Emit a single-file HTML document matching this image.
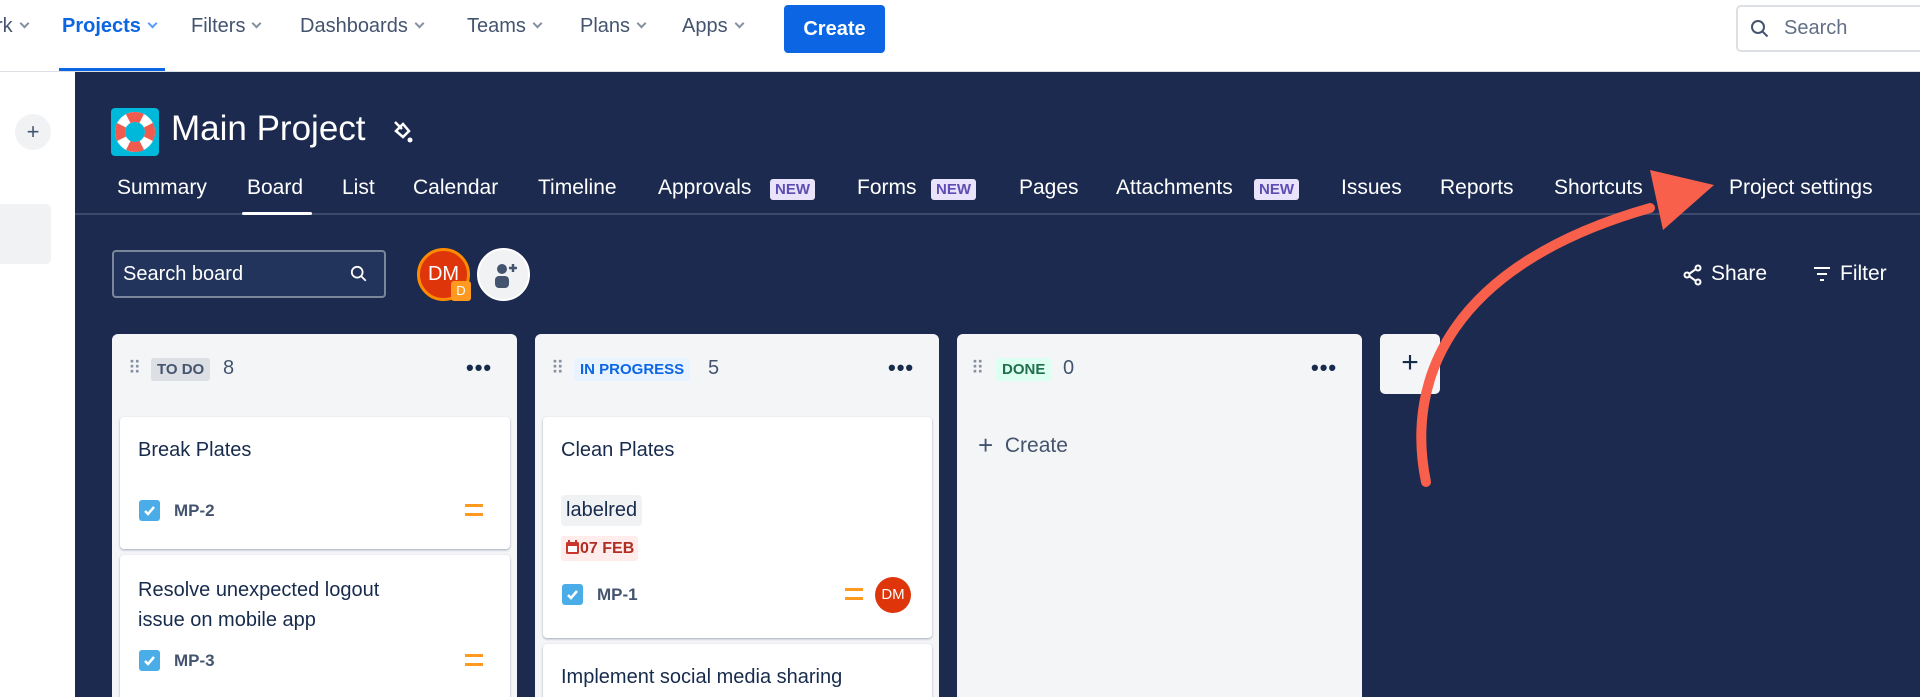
<!DOCTYPE html>
<html style="overflow:hidden;width:1920px;height:697px"><head><meta charset="utf-8"><style>
*{box-sizing:border-box;margin:0;padding:0}
body{width:1920px;height:697px;overflow:hidden;background:#fff;font-family:"Liberation Sans",sans-serif;position:relative;color:#172b4d}
.a{position:absolute;white-space:nowrap}
.nav{font-size:20px;color:#44546f;top:15px}
.chev{display:inline-block;width:7px;height:7px;border-right:2px solid #8590a2;border-bottom:2px solid #8590a2;transform:rotate(45deg);margin-left:8px;position:relative;top:-5px}
.dark{position:absolute;left:75px;top:72px;right:0;bottom:0;background:#1b2a4e}
.tab{color:#fff;font-size:21px;top:176px}
.new{background:#e9e4fb;color:#5e4db2;font-weight:bold;font-size:15px;padding:2px 5px;border-radius:3px;top:179px}
.col{position:absolute;background:#f4f5f7;border-radius:6px 6px 0 0;top:334px;height:363px}
.card{position:absolute;background:#fff;border-radius:4px;box-shadow:0 1px 2px rgba(9,30,66,.35)}
.ct{font-size:20px;color:#172b4d}
.key{font-size:17px;font-weight:bold;color:#44546f}
.pri{width:18px;height:12px;border-top:3px solid #ff991f;border-bottom:3px solid #ff991f}
.dots{font-size:22px;font-weight:bold;letter-spacing:1px;color:#172b4d}
</style></head><body>
<div style="position:absolute;left:0;top:71px;width:1920px;height:1px;background:#dcdfe4"></div>
<div class="a nav" style="left:-4px">rk<span class="chev"></span></div>
<div class="a nav" style="left:62px;color:#0c66e4;font-weight:bold">Projects<span class="chev" style="border-color:#579dff"></span></div>
<div style="position:absolute;left:59px;top:68px;width:106px;height:3px;background:#0c66e4"></div>
<div class="a nav" style="left:191px">Filters<span class="chev"></span></div>
<div class="a nav" style="left:300px">Dashboards<span class="chev"></span></div>
<div class="a nav" style="left:467px">Teams<span class="chev"></span></div>
<div class="a nav" style="left:580px">Plans<span class="chev"></span></div>
<div class="a nav" style="left:682px">Apps<span class="chev"></span></div>
<div class="a" style="left:784px;top:5px;width:101px;height:48px;background:#0c66e4;border-radius:4px;color:#fff;font-size:20px;font-weight:bold;text-align:center;line-height:48px">Create</div>
<div class="a" style="left:1736px;top:5px;width:200px;height:47px;border:2px solid #dcdfe4;border-radius:5px;color:#626f86;font-size:20px;line-height:43px;padding-left:46px">Search
<svg style="position:absolute;left:12px;top:12px" width="20" height="20" viewBox="0 0 20 20"><circle cx="8" cy="8" r="6" fill="none" stroke="#44546f" stroke-width="2"/><path d="M12.5 12.5l5 5" stroke="#44546f" stroke-width="2"/></svg></div>
<div class="a" style="left:15px;top:114px;width:36px;height:36px;border-radius:50%;background:#f1f2f4;text-align:center;line-height:35px;font-size:22px;color:#44546f">+</div>
<div class="a" style="left:0;top:204px;width:51px;height:60px;background:#f1f2f4;border-radius:0 5px 5px 0"></div>
<div class="dark"></div>
<div class="a" style="left:111px;top:108px;width:48px;height:48px;background:#00b8d9;border-radius:4px">
<svg width="48" height="48" viewBox="0 0 48 48"><circle cx="24" cy="24" r="15" fill="none" stroke="#fff" stroke-width="10"/><circle cx="24" cy="24" r="15" fill="none" stroke="#f15b4f" stroke-width="10" stroke-dasharray="14 9.5" stroke-dashoffset="7"/></svg></div>
<div class="a" style="left:171px;top:109px;font-size:35px;color:#fff">Main Project</div>
<svg class="a" style="left:392px;top:119px" width="22" height="26" viewBox="0 0 22 26"><path d="M4 12l7-7 6 7-6 6z" fill="none" stroke="#fff" stroke-width="2.5"/><path d="M3 3l7 7" stroke="#fff" stroke-width="2.5"/><circle cx="18" cy="21" r="2.5" fill="#fff"/></svg>
<div class="a tab" style="left:117px">Summary</div>
<div class="a tab" style="left:247px">Board</div>
<div class="a tab" style="left:342px">List</div>
<div class="a tab" style="left:413px">Calendar</div>
<div class="a tab" style="left:538px">Timeline</div>
<div class="a tab" style="left:658px">Approvals</div><div class="a new" style="left:770px">NEW</div>
<div class="a tab" style="left:857px">Forms</div><div class="a new" style="left:931px">NEW</div>
<div class="a tab" style="left:1019px">Pages</div>
<div class="a tab" style="left:1116px">Attachments</div><div class="a new" style="left:1254px">NEW</div>
<div class="a tab" style="left:1341px">Issues</div>
<div class="a tab" style="left:1440px">Reports</div>
<div class="a tab" style="left:1554px">Shortcuts</div>
<div class="a tab" style="left:1729px">Project settings</div>
<div class="a" style="left:75px;top:213px;width:1845px;height:2px;background:#3b4a6b"></div>
<div class="a" style="left:242px;top:212px;width:70px;height:3px;background:#fff;border-radius:2px"></div>
<div class="a" style="left:112px;top:250px;width:274px;height:48px;border:2px solid #7a869a;border-radius:4px;background:#22345c;color:#fff;font-size:20px;line-height:44px;padding-left:9px">Search board
<svg style="position:absolute;right:16px;top:13px" width="18" height="18" viewBox="0 0 20 20"><circle cx="8" cy="8" r="6" fill="none" stroke="#fff" stroke-width="2"/><path d="M12.5 12.5l5 5" stroke="#fff" stroke-width="2"/></svg></div>
<div class="a" style="left:417px;top:248px;width:53px;height:53px;border-radius:50%;background:#de350b;border:3px solid #ff8b00;color:#fff;font-size:20px;text-align:center;line-height:47px">DM</div>
<div class="a" style="left:451px;top:281px;width:20px;height:20px;background:#ff991f;color:#fff;font-size:13px;text-align:center;line-height:20px;border-radius:3px">D</div>
<div class="a" style="left:477px;top:248px;width:53px;height:53px;border-radius:50%;background:#f1f2f4;border:2px solid #fff">
<svg style="position:absolute;left:12px;top:11px" width="28" height="30" viewBox="0 0 28 30"><circle cx="11" cy="8" r="5" fill="#44546f"/><rect x="4" y="15" width="14" height="12" rx="4" fill="#44546f"/><path d="M22 3v8M18 7h8" stroke="#44546f" stroke-width="2.5"/></svg></div>
<svg class="a" style="left:1683px;top:264px" width="20" height="22" viewBox="0 0 20 22"><circle cx="15" cy="4" r="2.5" fill="none" stroke="#fff" stroke-width="2"/><circle cx="4" cy="11" r="2.5" fill="none" stroke="#fff" stroke-width="2"/><circle cx="15" cy="18" r="2.5" fill="none" stroke="#fff" stroke-width="2"/><path d="M6 10l7-5M6 12l7 5" stroke="#fff" stroke-width="2"/></svg>
<div class="a" style="left:1711px;top:262px;color:#fff;font-size:21px">Share</div>
<svg class="a" style="left:1812px;top:266px" width="20" height="16" viewBox="0 0 20 16"><path d="M2 2h16M5 8h10M8 14h4" stroke="#fff" stroke-width="2"/></svg>
<div class="a" style="left:1840px;top:262px;color:#fff;font-size:21px">Filter</div>

<div class="col" style="left:112px;width:405px"></div>
<div class="col" style="left:535px;width:404px"></div>
<div class="col" style="left:957px;width:405px"></div>
<div class="a" style="left:1380px;top:334px;width:60px;height:60px;background:#f4f5f7;border-radius:5px;text-align:center;line-height:58px;font-size:30px;color:#172b4d">+</div>

<div class="a" style="left:128px;top:358px;color:#8590a2;font-size:18px;letter-spacing:-1px">⠿</div>
<div class="a" style="left:151px;top:358px;background:#dcdfe4;color:#44546f;font-size:15px;font-weight:bold;padding:3px 6px;border-radius:3px">TO DO</div>
<div class="a" style="left:223px;top:357px;font-size:20px;color:#44546f">8</div>
<div class="a dots" style="left:466px;top:355px">•••</div>
<div class="a" style="left:551px;top:358px;color:#8590a2;font-size:18px;letter-spacing:-1px">⠿</div>
<div class="a" style="left:574px;top:358px;background:#e9f2ff;color:#0c66e4;font-size:15px;font-weight:bold;padding:3px 6px;border-radius:3px">IN PROGRESS</div>
<div class="a" style="left:708px;top:357px;font-size:20px;color:#44546f">5</div>
<div class="a dots" style="left:888px;top:355px">•••</div>
<div class="a" style="left:971px;top:358px;color:#8590a2;font-size:18px;letter-spacing:-1px">⠿</div>
<div class="a" style="left:996px;top:358px;background:#dcfff1;color:#216e4e;font-size:15px;font-weight:bold;padding:3px 6px;border-radius:3px">DONE</div>
<div class="a" style="left:1063px;top:357px;font-size:20px;color:#44546f">0</div>
<div class="a dots" style="left:1311px;top:355px">•••</div>
<div class="a" style="left:978px;top:428px;font-size:21px;color:#44546f"><span style="font-size:26px;position:relative;top:2px">+</span>&nbsp; Create</div>

<div class="card" style="left:120px;top:417px;width:390px;height:132px">
<div class="a ct" style="left:18px;top:22px">Break Plates</div>
<svg class="a" style="left:19px;top:83px" width="21" height="21" viewBox="0 0 21 21"><rect width="21" height="21" rx="3" fill="#4bade8"/><path d="M6 11l3 3 6-7" fill="none" stroke="#fff" stroke-width="2.5"/></svg>
<div class="a key" style="left:54px;top:84px">MP-2</div>
<div class="a pri" style="left:345px;top:87px"></div></div>
<div class="card" style="left:120px;top:555px;width:390px;height:160px">
<div class="a ct" style="left:18px;top:20px;line-height:30px">Resolve unexpected logout<br>issue on mobile app</div>
<svg class="a" style="left:19px;top:95px" width="21" height="21" viewBox="0 0 21 21"><rect width="21" height="21" rx="3" fill="#4bade8"/><path d="M6 11l3 3 6-7" fill="none" stroke="#fff" stroke-width="2.5"/></svg>
<div class="a key" style="left:54px;top:96px">MP-3</div>
<div class="a pri" style="left:345px;top:99px"></div></div>

<div class="card" style="left:543px;top:417px;width:389px;height:221px">
<div class="a ct" style="left:18px;top:22px">Clean Plates</div>
<div class="a" style="left:18px;top:78px;background:#f1f2f4;border-radius:4px;padding:4px 5px;font-size:20px">labelred</div>
<div class="a" style="left:18px;top:119px;background:#ffeceb;border-radius:3px;padding:3px 4px;font-size:16px;font-weight:bold;color:#ae2e24">
<svg width="15" height="16" viewBox="0 0 15 16" style="vertical-align:-2px"><rect x="1" y="3" width="13" height="12" rx="1.5" fill="#c9372c"/><rect x="3" y="7" width="9" height="6" fill="#fff"/><path d="M4 1v4M11 1v4" stroke="#c9372c" stroke-width="2"/></svg>07 FEB</div>
<svg class="a" style="left:19px;top:167px" width="21" height="21" viewBox="0 0 21 21"><rect width="21" height="21" rx="3" fill="#4bade8"/><path d="M6 11l3 3 6-7" fill="none" stroke="#fff" stroke-width="2.5"/></svg>
<div class="a key" style="left:54px;top:168px">MP-1</div>
<div class="a pri" style="left:302px;top:171px"></div>
<div class="a" style="left:332px;top:160px;width:36px;height:36px;border-radius:50%;background:#de350b;color:#fff;font-size:15px;text-align:center;line-height:36px">DM</div></div>
<div class="card" style="left:543px;top:644px;width:389px;height:80px">
<div class="a ct" style="left:18px;top:22px">Implement social media sharing</div></div>

<svg class="a" style="left:0;top:0" width="1920" height="697" viewBox="0 0 1920 697">
<path d="M1426 482 C1405 380,1450 265,1650 208" fill="none" stroke="#f9604b" stroke-width="10" stroke-linecap="round"/>
<path d="M1650 170 L1714 185 L1663 230 Z" fill="#f9604b"/>
</svg>
</body></html>
